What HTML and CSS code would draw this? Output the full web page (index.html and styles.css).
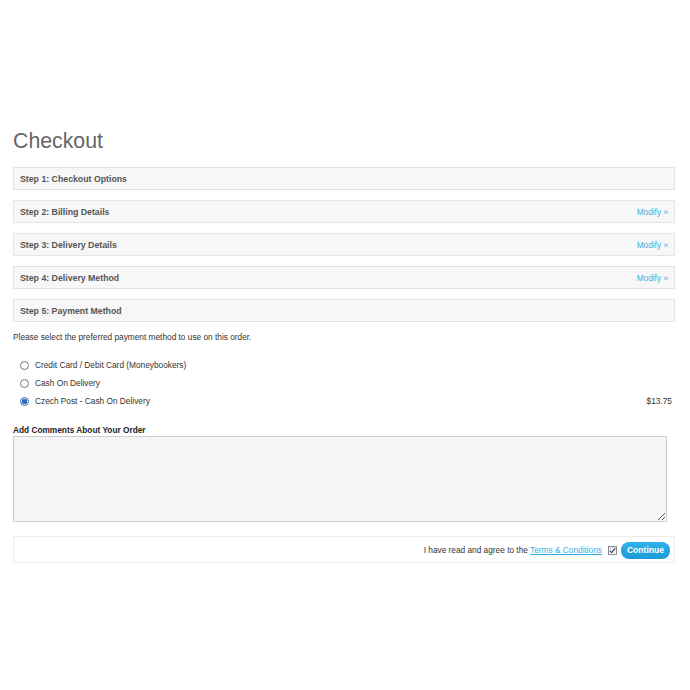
FILE: index.html
```html
<!DOCTYPE html>
<html lang="en">
	<head>
		<meta charset="UTF-8" />
		<title>Checkout</title>
		<link rel="stylesheet" href="styles.css">
	</head>
	<body>
		<div class="content">
			<h1>Checkout</h1>

			<div class="step"><span>Step 1: Checkout Options</span></div>
			<div class="step"><span>Step 2: Billing Details</span><a href="#" class="modify">Modify &raquo;</a></div>
			<div class="step"><span>Step 3: Delivery Details</span><a href="#" class="modify">Modify &raquo;</a></div>
			<div class="step"><span>Step 4: Delivery Method</span><a href="#" class="modify">Modify &raquo;</a></div>
			<div class="step"><span>Step 5: Payment Method</span></div>

			<p class="intro">Please select the preferred payment method to use on this order.</p>

			<div class="methods">
				<label class="method"><input type="radio" name="payment"><span class="method-name">Credit Card / Debit Card (Moneybookers)</span></label>
				<label class="method"><input type="radio" name="payment"><span class="method-name">Cash On Delivery</span></label>
				<label class="method"><input type="radio" name="payment" checked><span class="method-name">Czech Post - Cash On Delivery</span><span class="price">$13.75</span></label>
			</div>

			<div class="comments">
				<b>Add Comments About Your Order</b>
				<textarea></textarea>
			</div>

			<div class="buttons">
				<span>I have read and agree to the <a href="#" class="terms">Terms &amp; Conditions</a></span>
				<span class="agree"></span>
				<button class="continue">Continue</button>
			</div>
		</div>
	</body>
</html>
```

FILE: styles.css
```css
* {
	margin: 0;
	padding: 0;
	box-sizing: border-box;
}

body {
	font-family: "Liberation Sans", Arial, sans-serif;
	font-size: 8.3px;
	color: #333;
	background: #fff;
}

.content {
	padding: 128px 15px 0 13px;
}

h1 {
	font-size: 21.3px;
	font-weight: normal;
	line-height: 26px;
	color: #666;
	margin-bottom: 13px;
}

.step {
	display: flex;
	justify-content: space-between;
	align-items: center;
	height: 23px;
	margin-bottom: 10px;
	padding: 0 6px;
	background: #f7f7f7;
	border: 1px solid #e4e4e4;
	font-size: 8.75px;
	font-weight: bold;
	color: #555;
}

.modify {
	font-weight: normal;
	font-size: 8.3px;
	color: #38b0e3;
	text-decoration: none;
}

.intro {
	margin-top: 10px;
	line-height: 11px;
}

.methods {
	display: flex;
	flex-direction: column;
	margin-top: 13px;
}

.method {
	display: flex;
	align-items: center;
	height: 18px;
	padding-left: 6px;
}

.method input {
	width: 9px;
	height: 9px;
	margin: 0 6px 0 1px;
	accent-color: #2d6db5;
}

.method-name {
	flex: 1;
}

.price {
	padding-right: 3px;
}

.comments {
	margin-top: 14px;
}

.comments b {
	display: block;
	line-height: 12px;
	color: #222;
}

.comments textarea {
	display: block;
	width: 654px;
	height: 86px;
	background: #f5f5f5;
	border: 1px solid #cfcfcf;
	resize: both;
}

.buttons {
	display: flex;
	justify-content: flex-end;
	align-items: center;
	height: 27px;
	margin-top: 14px;
	padding: 1px 4px 0 0;
	border: 1px solid #ececec;
	color: #333;
}

.terms {
	color: #38b0e3;
}

.agree {
	position: relative;
	width: 9px;
	height: 9px;
	margin: 0 4px 0 6px;
	border: 1px solid #8a8a9a;
	background: linear-gradient(#e2e2e6, #f8f8f8);
}

.agree::after {
	content: "";
	position: absolute;
	left: 2px;
	top: 0;
	width: 2px;
	height: 5px;
	border: solid #2a3a6a;
	border-width: 0 1px 1px 0;
	transform: rotate(40deg);
}

.continue {
	height: 17px;
	width: 49px;
	border: none;
	border-radius: 8px;
	background: linear-gradient(#2fb2ec, #1a9bd7);
	color: #fff;
	font-family: "Liberation Sans", Arial, sans-serif;
	font-size: 8.6px;
	font-weight: bold;
}
```
